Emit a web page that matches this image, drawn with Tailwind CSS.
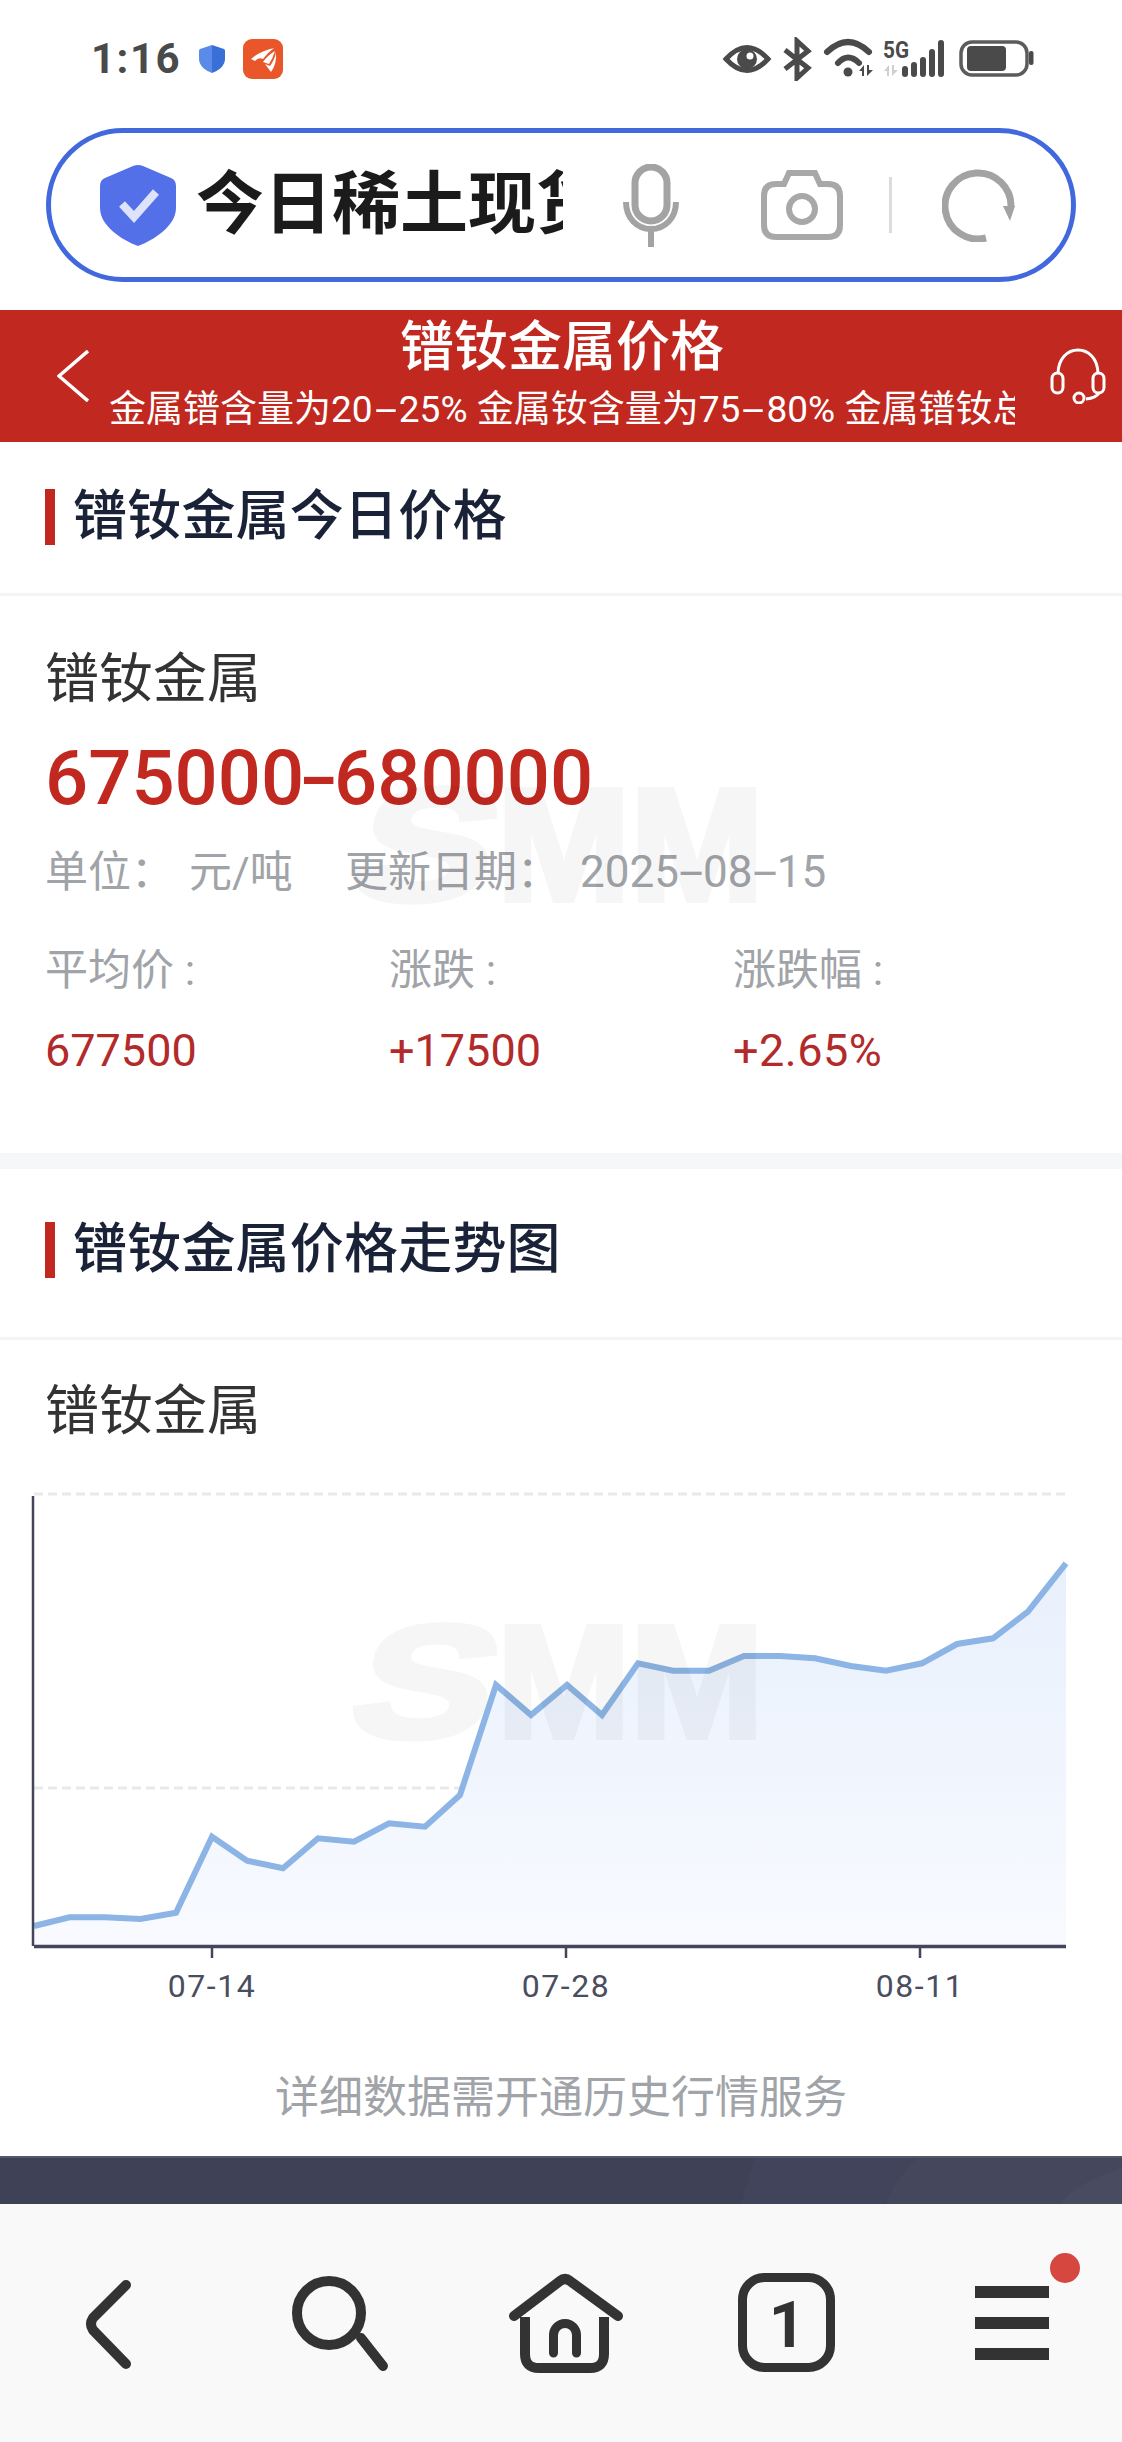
<!DOCTYPE html>
<html lang="zh-CN">
<head>
  <meta charset="UTF-8">
  <meta name="viewport" content="width=device-width, initial-scale=1.0">
  <title>镨钕金属价格</title>
  <script src="https://cdn.jsdelivr.net/npm/@tailwindcss/browser@4"></script>
</head>
<body class="bg-white font-['Roboto','Noto_Sans_CJK_SC',sans-serif]">
  <div class="relative w-[1122px] h-[2442px] overflow-hidden bg-white">

    <!-- Status bar -->
    <div class="flex items-center h-[116px] pl-[91px] pt-[2px]">
      <span class="text-[42px] leading-[42px] font-bold text-[#4a4a4a] tracking-[1.500px]">1:16</span>
      <svg class="ml-[18px] w-[26px] h-[28px]" viewBox="0 0 26 28">
        <path d="M13 0 L25 4 Q26 4.500 26 6 V14 C26 21 19 26 13 28 Z" fill="#3a6fd8"/>
        <path d="M13 0 L1 4 Q0 4.500 0 6 V14 C0 21 7 26 13 28 Z" fill="#5b8be8"/>
      </svg>
      <svg class="ml-[18px] w-[40px] h-[40px]" viewBox="0 0 40 40">
        <rect width="40" height="40" rx="9" fill="#e8562a"/>
        <path d="M8 20 Q17 12 31 9 Q24 14 20 20 Q15 18 12 22 Z" fill="#fff"/>
        <path d="M20 23 Q25 16 32 12 Q30 19 26 25 Z" fill="#fff"/>
        <path d="M22 25 L27 27 Q32 20 33 13 Q34 25 28 33 Z" fill="#fff"/>
      </svg>
      <svg class="ml-auto mr-[82px] w-[320px] h-[44px]" viewBox="0 0 320 44" fill="none">
        <path d="M6 22 Q27 -1 48 22 Q27 45 6 22 Z" stroke="#4a4a4a" stroke-width="5"/>
        <circle cx="27" cy="22" r="10" fill="#4a4a4a"/>
        <circle cx="30" cy="19" r="3.500" fill="#fff"/>
        <path d="M65 13 L88 31 L77 41 V4 L88 14 L65 32" stroke="#4a4a4a" stroke-width="5"/>
        <path d="M107 15 Q128 -5 149 15" stroke="#4a4a4a" stroke-width="6" stroke-linecap="round"/>
        <path d="M118 26 Q128 15 139 26" stroke="#4a4a4a" stroke-width="6" stroke-linecap="round"/>
        <circle cx="128" cy="35" r="4.500" fill="#4a4a4a"/>
        <path d="M139 34 L144 28 V39 H142 V34 Z M147 28 H149 V33 H153 L147 39 Z" fill="#4a4a4a"/>
        <text x="163" y="21" font-size="24" font-weight="700" fill="#4a4a4a" textLength="26" lengthAdjust="spacingAndGlyphs">5G</text>
        <path d="M164 34 L169 28 V39 H167 V34 Z M172 28 H174 V33 H178 L172 39 Z" fill="#cfcfcf"/>
        <rect x="182" y="29" width="6" height="11" rx="3" fill="#4a4a4a"/>
        <rect x="191" y="25" width="6" height="15" rx="3" fill="#4a4a4a"/>
        <rect x="200" y="20" width="6" height="20" rx="3" fill="#4a4a4a"/>
        <rect x="209" y="12" width="6" height="28" rx="3" fill="#4a4a4a"/>
        <rect x="218" y="3" width="6" height="37" rx="3" fill="#4a4a4a"/>
        <rect x="241" y="5" width="66" height="33" rx="11" stroke="#5c5c5c" stroke-width="3.500"/>
        <rect x="247" y="9" width="39" height="25" rx="4" fill="#4a4a4a"/>
        <rect x="309" y="14" width="4.500" height="14" rx="2" fill="#4a4a4a"/>
      </svg>
    </div>

    <!-- Search box -->
    <div class="flex items-center w-[1030px] h-[154px] ml-[46px] mt-[12px] mb-[28px] pl-[49px] border-[5px] border-[#4169dd] rounded-full">
      <svg class="w-[76px] h-[82px] shrink-0" viewBox="0 0 76 82" fill="none">
        <path d="M33 2 Q38 0 43 2 L71 14 Q76 16 76 22 V44 C76 62 54 76 38 82 C22 76 0 62 0 44 V22 Q0 16 5 14 Z" fill="#5470e8"/>
        <path d="M22 40 L34 53 L56 28" stroke="#dce3fb" stroke-width="8"/>
      </svg>
      <div class="w-[367px] ml-[20px] overflow-hidden whitespace-nowrap text-[68px] leading-[80px] font-bold text-[#1b1b1b] shrink-0">今日稀土现货</div>
      <svg class="w-[56px] h-[83px] ml-[60px] shrink-0" viewBox="0 0 56 83" fill="none" stroke="#a3a3a3">
        <rect x="12" y="3" width="32" height="54" rx="16" stroke-width="7"/>
        <path d="M3 38 C3 54 14 65 28 65 C42 65 53 54 53 38 M28 65 V83" stroke-width="6"/>
      </svg>
      <svg class="w-[82px] h-[70px] ml-[82px] shrink-0" viewBox="0 0 82 70" fill="none" stroke="#a8a8a8" stroke-width="6">
        <path d="M15 14 H23 L28 3 H54 L59 14 H67 Q79 14 79 26 V55 Q79 67 67 67 H15 Q3 67 3 55 V26 Q3 14 15 14 Z"/>
        <circle cx="41" cy="39" r="13"/>
      </svg>
      <div class="w-[3px] h-[56px] ml-[46px] bg-[#dcdcdc] shrink-0"></div>
      <svg class="w-[74px] h-[73px] ml-[50px] shrink-0" viewBox="0 0 74 73" fill="none">
        <path d="M44 69 A33 33 0 1 1 69 38" stroke="#a3a3a3" stroke-width="7"/>
        <path d="M61 37 H73 L68 52 Z" fill="#a3a3a3"/>
      </svg>
    </div>

    <!-- Red header -->
    <div class="flex h-[132px] bg-[#c12820] text-white">
      <div class="w-[109px] shrink-0 pt-[40px] pl-[57px]">
        <svg class="w-[32px] h-[52px]" viewBox="0 0 32 52" fill="none">
          <path d="M31 1 L2 26 L31 51" stroke="#fff" stroke-width="3.500"/>
        </svg>
      </div>
      <div class="w-[906px] shrink-0 overflow-hidden">
        <div class="pt-[11px] text-center text-[54px] leading-[54px] font-medium">镨钕金属价格</div>
        <div class="mt-[16px] whitespace-nowrap text-[37px] leading-[37px]">金属镨含量为20<span class="inline-block mx-[8px] scale-x-[2.2]">-</span>25% 金属钕含量为75<span class="inline-block mx-[8px] scale-x-[2.2]">-</span>80% 金属镨钕总含量</div>
      </div>
      <div class="pl-[35px] pt-[38px]">
        <svg class="w-[56px] h-[56px]" viewBox="0 0 56 56" fill="none" stroke="#fff" stroke-width="3">
          <path d="M8 26 C8 -6 48 -6 48 26"/>
          <rect x="2" y="25" width="11" height="20" rx="5.500"/>
          <rect x="43" y="25" width="11" height="20" rx="5.500"/>
          <path d="M49 45 Q46 50 36 51"/>
          <circle cx="29" cy="50" r="5"/>
        </svg>
      </div>
    </div>

    <!-- Today price -->
    <div class="flex items-center h-[154px] pb-[1px] pl-[45px] border-b-[3px] border-[#f3f4f8]">
      <div class="w-[10px] h-[56px] bg-[#c12820]"></div>
      <h2 class="ml-[18px] text-[54px] leading-[54px] tracking-[0.200px] font-medium text-[#1a2238]">镨钕金属今日价格</h2>
    </div>
    <section class="h-[557px] px-[45px] pt-[57px]">
      <div class="text-[54px] leading-[54px] text-[#333]">镨钕金属</div>
      <div class="mt-[33px] text-[76px] leading-[77px] font-medium text-[#c12820]">675000<span class="inline-block mx-[2px] scale-x-[1.5]">-</span>680000</div>
      <div class="flex mt-[34px] text-[43px] leading-[43px] text-[#a0a3a8]">
        <span class="w-[144px]">单位：</span>
        <span class="w-[156px]">元/吨</span>
        <span class="w-[235px]">更新日期：</span>
        <span class="text-[44px]">2025<span class="inline-block mx-[6px] scale-x-[2]">-</span>08<span class="inline-block mx-[6px] scale-x-[2]">-</span>15</span>
      </div>
      <div class="flex mt-[55px] text-[43px] leading-[43px] text-[#a0a3a8]">
        <span class="w-[344px]">平均价 :</span>
        <span class="w-[344px]">涨跌 :</span>
        <span>涨跌幅 :</span>
      </div>
      <div class="flex mt-[36px] text-[45px] leading-[45px] text-[#b22a2a]">
        <span class="w-[344px]">677500</span>
        <span class="w-[344px]">+17500</span>
        <span class="tracking-[0.500px]">+2.65%</span>
      </div>
    </section>
    <div class="h-[16px] bg-[#f6f7f9]"></div>

    <!-- Trend -->
    <div class="flex items-center h-[171px] pb-[6px] pl-[45px] border-b-[3px] border-[#f3f4f8]">
      <div class="w-[10px] h-[56px] bg-[#c12820]"></div>
      <h2 class="ml-[18px] text-[54px] leading-[54px] tracking-[0.200px] font-medium text-[#1a2238]">镨钕金属价格走势图</h2>
    </div>
    <div class="mt-[45px] pl-[45px] text-[54px] leading-[54px] text-[#333]">镨钕金属</div>
    <svg class="block mt-[1px] w-[1122px] h-[570px]" viewBox="0 1440 1122 570" fill="none">
      <defs>
        <linearGradient id="areaFill" x1="0" y1="0" x2="0" y2="1">
          <stop offset="0" stop-color="#e8f0fc"/>
          <stop offset="1" stop-color="#f8faff"/>
        </linearGradient>
      </defs>
      <path d="M34 1494 H1066 M34 1788 H1066" stroke="#e8e9ee" stroke-width="3" stroke-dasharray="9 5"/>
      <path d="M34 1926 L69.500 1917.300 L105 1917.300 L140.500 1919 L176 1912.700 L212 1836.700 L247 1860.700 L283 1868.300 L318 1838.300 L354 1841.700 L389 1823.300 L425 1826.700 L460 1795 L496 1685 L531 1715 L567 1685 L602 1715 L638 1663.300 L673 1670.700 L709 1670.700 L744 1656 L780 1656 L815 1658.300 L851 1666 L886 1670.700 L922 1663.300 L957 1644 L993 1638.300 L1028 1611.700 L1066 1563.300 V1945 H34 Z" fill="url(#areaFill)"/>
      <path d="M34 1926 L69.500 1917.300 L105 1917.300 L140.500 1919 L176 1912.700 L212 1836.700 L247 1860.700 L283 1868.300 L318 1838.300 L354 1841.700 L389 1823.300 L425 1826.700 L460 1795 L496 1685 L531 1715 L567 1685 L602 1715 L638 1663.300 L673 1670.700 L709 1670.700 L744 1656 L780 1656 L815 1658.300 L851 1666 L886 1670.700 L922 1663.300 L957 1644 L993 1638.300 L1028 1611.700 L1066 1563.300" stroke="#8cb4e4" stroke-width="6"/>
      <path d="M33 1496 V1946" stroke="#43465a" stroke-width="2.500"/>
      <path d="M34 1946.500 H1066" stroke="#43465a" stroke-width="3.500"/>
      <path d="M212 1948 V1958 M566 1948 V1958 M920 1948 V1958" stroke="#43465a" stroke-width="2.500"/>
      <g fill="#4a4d60" font-size="32" text-anchor="middle" letter-spacing="1.500">
        <text x="212" y="1997">07-14</text>
        <text x="566" y="1997">07-28</text>
        <text x="920" y="1997">08-11</text>
      </g>
    </svg>
    <div class="mt-[66px] text-center text-[44px] leading-[44px] text-[#a0a3a8]">详细数据需开通历史行情服务</div>

    <!-- Dark band -->
    <div class="relative mt-[36px] h-[48px] bg-[#3f4256] border-t-2 border-[#55586a] overflow-hidden">
      <svg class="absolute inset-0 w-[1122px] h-[48px]" viewBox="0 0 1122 48">
        <path d="M755 0 L740 48 H1122 V0 Z" fill="#41445a"/>
        <path d="M918 0 Q895 20 885 48 H1122 V0 Z" fill="#45485c"/>
        <path d="M1122 10 Q1075 25 1058 48 H1122 Z" fill="#494c60"/>
      </svg>
    </div>

    <!-- Browser toolbar -->
    <nav class="flex gap-[105px] h-[238px] pl-[48px] pt-[58px] bg-[#f9f9f9]">
      <svg class="w-[120px] h-[120px] overflow-visible" viewBox="0 0 120 120" fill="none" stroke="#333" stroke-width="10" stroke-linecap="round">
        <path d="M78 23 L45 56 Q41 62 45 68 L78 102"/>
      </svg>
      <svg class="w-[120px] h-[120px] overflow-visible" viewBox="0 0 120 120" fill="none" stroke="#333" stroke-width="10" stroke-linecap="round">
        <circle cx="56" cy="51" r="32"/>
        <path d="M88 76 L110 104"/>
      </svg>
      <svg class="w-[120px] h-[120px] overflow-visible" viewBox="0 0 120 120" fill="none" stroke="#333" stroke-width="10" stroke-linejoin="round">
        <path d="M16 54 L62 19 Q67 15 72 19 L120 54" stroke-linecap="round"/>
        <path d="M27 55 V92 Q27 106 41 106 H92 Q106 106 106 92 V55"/>
        <path d="M55.500 91 V73 A11.500 11.500 0 0 1 78.500 73 V91" stroke-width="9" stroke-linecap="round"/>
      </svg>
      <svg class="w-[120px] h-[120px] overflow-visible" viewBox="0 0 120 120" fill="none">
        <rect x="19.500" y="15.500" width="88" height="90" rx="22" stroke="#333" stroke-width="9"/>
        <text x="64" y="85" font-size="64" font-weight="700" fill="#333" text-anchor="middle">1</text>
      </svg>
      <svg class="w-[120px] h-[120px] overflow-visible" viewBox="0 0 120 120">
        <rect x="27" y="24" width="74" height="12" fill="#333"/>
        <rect x="27" y="55" width="74" height="12" fill="#333"/>
        <rect x="27" y="86" width="74" height="12" fill="#333"/>
        <circle cx="117" cy="6" r="15" fill="#d5473f"/>
      </svg>
    </nav>

    <!-- SMM watermarks -->
    <div class="absolute left-[360px] top-[765px] whitespace-nowrap text-[160px] leading-[160px] font-bold font-['Liberation_Sans',sans-serif] text-black opacity-[0.03] [-webkit-text-stroke:6px_black] pointer-events-none"><span class="inline-block w-[137px] text-right origin-right -skew-x-12 scale-x-[1.3]">S</span>MM</div>
    <div class="absolute left-[360px] top-[1602px] whitespace-nowrap text-[160px] leading-[160px] font-bold font-['Liberation_Sans',sans-serif] text-black opacity-[0.03] [-webkit-text-stroke:6px_black] pointer-events-none"><span class="inline-block w-[137px] text-right origin-right -skew-x-12 scale-x-[1.3]">S</span>MM</div>
  </div>
</body>
</html>
